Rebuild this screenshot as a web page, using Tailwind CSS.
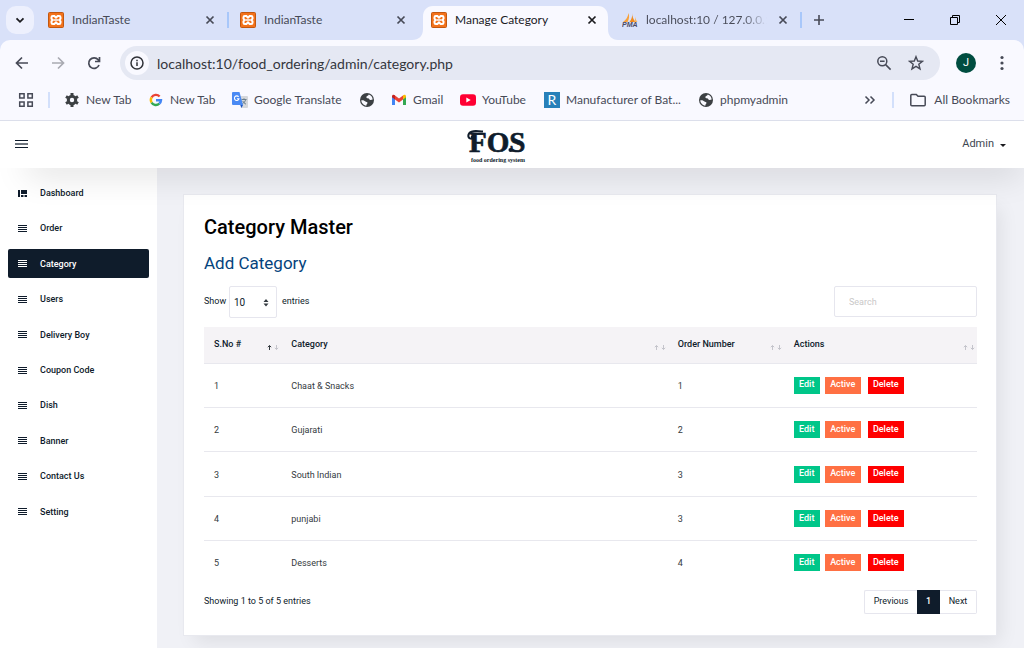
<!DOCTYPE html>
<html lang="en">
<head>
<meta charset="utf-8">
<title>Manage Category</title>
<script src="https://cdn.jsdelivr.net/npm/@tailwindcss/browser@4"></script>
</head>
<body class="flex min-h-screen flex-col bg-[#f0f1f6] font-['Roboto',sans-serif] text-[9px] text-[#0e1b2b]">

<svg class="hidden">
  <symbol id="xampp" viewBox="0 0 16 16">
    <rect x=".5" y=".5" width="15" height="15" rx="1" fill="#f3721b" stroke="#c2570f"/>
    <path d="M4.800 4h1.500L8 5.600 9.700 4h1.500c.8 0 1.300.5 1.300 1.300v1.400L11.400 8l1.100 1.300v1.400c0 .8-.5 1.300-1.300 1.300H9.700L8 10.400 6.300 12H4.800c-.8 0-1.300-.5-1.300-1.300V9.300L4.600 8 3.500 6.700V5.300C3.500 4.500 4 4 4.800 4z" fill="none" stroke="#fff" stroke-width="2"/>
    <path d="M5.500 8h5" stroke="#fff" stroke-width="1.500"/>
  </symbol>
  <symbol id="close" viewBox="0 0 16 16"><path d="M4.500 4.500l7 7M11.500 4.500l-7 7" stroke="currentColor" stroke-width="1.700"/></symbol>
  <symbol id="lines" viewBox="0 0 10 8"><path d="M0 .5h9M0 2.500h9M0 4.500h9M0 6.500h9" stroke="currentColor"/></symbol>
  <symbol id="globe" viewBox="0 0 16 16">
    <circle cx="8" cy="8" r="7" fill="#3c4043"/>
    <path d="M2.300 8.300c1.800-.3 3 .2 3.800 1 .9.900 2.400.3 2.400 1.700 0 1-1.200 1-1.200 2.700C4.500 13.400 2.300 11 2.300 8.300zM9.800 2.600c-.3 1.500-2 1.200-2.400 2.200-.3.900.3 1.500 1.500 1.500 1.400 0 1.200 1.600 2.500 1.700.9.100 1.400-.2 2.300-.5-.2-2.300-1.700-4.200-3.900-4.900z" fill="#f9f9ff"/>
  </symbol>
  <symbol id="sort" viewBox="0 0 14 8"><path d="M2.500 7V2.500M.8 4.200l1.700-1.700 1.700 1.700M9.500 2v4.500M7.800 4.800l1.700 1.700 1.700-1.700" fill="none" stroke="#c4c4cb"/></symbol>
</svg>

<header class="font-['Lato','Open_Sans',sans-serif] text-[12px] text-[#474a57]">
  <!-- Tab strip -->
  <div class="flex h-10 items-center bg-[#d9e1f9] pl-[6px]">
    <button aria-label="Search tabs" class="grid size-7 shrink-0 place-items-center rounded-[10px] bg-[#edf0fd]"><svg class="size-4" viewBox="0 0 16 16"><path d="M4.500 6.300L8 9.800l3.500-3.500" fill="none" stroke="#1b1b1f" stroke-width="1.800"/></svg></button>
    <div class="ml-[6px] flex h-full min-w-0">
      <div class="relative flex h-full w-[191px] shrink-0 items-center px-2">
        <svg class="mr-2 size-4"><use href="#xampp"/></svg><span class="flex-1">IndianTaste</span>
        <button aria-label="Close tab" class="mr-[5px] size-4"><svg class="size-4"><use href="#close"/></svg></button>
        <span class="absolute right-[2px] h-4 w-[2px] bg-[#a8c7fa]"></span>
      </div>
      <div class="flex h-full w-[191px] shrink-0 items-center px-2 pl-[9px]">
        <svg class="mr-2 size-4"><use href="#xampp"/></svg><span class="flex-1">IndianTaste</span>
        <button aria-label="Close tab" class="mr-[5px] size-4"><svg class="size-4"><use href="#close"/></svg></button>
      </div>
      <div class="relative flex h-full w-[191px] shrink-0 items-center px-2 pl-[9px] text-[#1b1b1f]">
        <svg class="absolute bottom-0 left-[-10px] h-[34px] w-[206px]" viewBox="0 0 206 34"><path d="M0 34c7 0 11-4 11-11V11C11 4 15 0 21 0h165c6 0 10 4 10 11v12c0 7 4 11 10 11z" fill="#f9f9ff"/></svg>
        <svg class="relative mr-2 size-4"><use href="#xampp"/></svg><span class="relative flex-1">Manage Category</span>
        <button aria-label="Close tab" class="relative mr-[5px] size-4"><svg class="size-4"><use href="#close"/></svg></button>
      </div>
      <div class="relative flex h-full w-[191px] shrink-0 items-center px-2 pl-[9px]">
        <svg class="mr-2 size-4" viewBox="0 0 16 16"><path d="M6.500 1c1 3 .8 6-1 9H1c3-2 5-5 5.500-9z" fill="#f9a13a"/><path d="M10.500 1c-.4 3 .5 6 3 9H7.500c2-2.500 2.800-5.500 3-9z" fill="#f28a1c"/><path d="M13.500 4.500c-.3 2 .7 4 2 5.500h-3z" fill="#f9b45c"/><text x="0" y="15" font-family="Liberation Sans" font-size="7" font-weight="bold" font-style="italic" fill="#4b4a66">PMA</text></svg>
        <span class="w-[121px] whitespace-nowrap bg-linear-to-r from-[#474a57] from-80% to-[#d9e1f9] bg-clip-text text-transparent">localhost:10 / 127.0.0.1</span>
        <button aria-label="Close tab" class="ml-2 size-4"><svg class="size-4"><use href="#close"/></svg></button>
        <span class="absolute right-[2px] h-4 w-[2px] bg-[#a8c7fa]"></span>
      </div>
      <button aria-label="New tab" class="ml-[7px] w-4"><svg class="size-4" viewBox="0 0 16 16"><path d="M8 3v10M3 8h10" stroke="currentColor" stroke-width="1.600"/></svg></button>
    </div>
    <div class="ml-auto flex h-full text-black">
      <button aria-label="Minimize" class="grid w-[46px] place-items-center"><svg class="size-3" viewBox="0 0 12 12"><path d="M1 5.500h10" stroke="currentColor"/></svg></button>
      <button aria-label="Restore" class="grid w-[46px] place-items-center"><svg class="size-3" viewBox="0 0 12 12"><path d="M1.500 3.500h7v7h-7zM3.500 3.500v-2h7v7h-2" fill="none" stroke="currentColor"/></svg></button>
      <button aria-label="Close" class="grid w-[46px] place-items-center"><svg class="size-3" viewBox="0 0 12 12"><path d="M1 1l10 10M11 1L1 11" stroke="currentColor"/></svg></button>
    </div>
  </div>

  <!-- Address bar -->
  <div class="bg-[#d9e1f9]">
    <div class="flex h-[46px] items-center rounded-t-[10px] bg-[#f9f9ff] pl-[14px] pr-[14px]">
      <button aria-label="Back" class="size-4"><svg class="size-4" viewBox="0 0 16 16"><path d="M14 8H3M8 2.500L2.500 8 8 13.500" fill="none" stroke="#474a57" stroke-width="1.700"/></svg></button>
      <button aria-label="Forward" class="ml-5 size-4"><svg class="size-4" viewBox="0 0 16 16"><path d="M2 8h11M8 2.500L13.500 8 8 13.500" fill="none" stroke="#a9aab2" stroke-width="1.700"/></svg></button>
      <button aria-label="Reload" class="ml-5 size-4"><svg class="size-4" viewBox="0 0 16 16"><path d="M13 10a5.300 5.300 0 1 1-.8-5.200L13.500 6M13.500 2v4.500H9" fill="none" stroke="#474a57" stroke-width="1.700"/></svg></button>
      <div class="ml-[18px] flex h-[34px] flex-1 items-center rounded-full bg-[#e5e8f3] px-[5px]">
        <button aria-label="Site information" class="grid size-6 place-items-center rounded-full bg-[#f9f9ff]"><svg class="size-4" viewBox="0 0 16 16"><circle cx="8" cy="8" r="6" fill="none" stroke="#303238" stroke-width="1.500"/><path d="M8 7.200V11M8 4.800v1.400" stroke="#303238" stroke-width="1.500"/></svg></button>
        <input aria-label="Address" class="ml-2 min-w-0 flex-1 bg-transparent text-[14px] text-[#34363d] outline-none" value="localhost:10/food_ordering/admin/category.php">
        <button aria-label="Zoom out" class="size-4"><svg class="size-4" viewBox="0 0 16 16"><circle cx="6.300" cy="6.300" r="4.500" fill="none" stroke="#474a57" stroke-width="1.500"/><path d="M9.600 9.600l5 5M4 6.300h4.600" stroke="#474a57" stroke-width="1.500"/></svg></button>
        <button aria-label="Bookmark this page" class="ml-4 mr-[11px] size-4"><svg class="size-4" viewBox="0 0 16 16"><path d="M8 1.700l1.700 4.300 4.700.3-3.600 3 1.200 4.600L8 11.400l-4 2.500 1.200-4.600-3.600-3L6.300 6z" fill="none" stroke="#474a57" stroke-width="1.400"/></svg></button>
      </div>
      <button aria-label="Profile" class="ml-4 size-5 rounded-full bg-[#004d40] font-['Roboto'] text-[11px] leading-5 text-white">J</button>
      <button aria-label="Menu" class="ml-[18px] size-4"><svg class="size-4" viewBox="0 0 16 16" fill="#474a57"><circle cx="8" cy="2.500" r="1.600"/><circle cx="8" cy="8" r="1.600"/><circle cx="8" cy="13.500" r="1.600"/></svg></button>
    </div>
  </div>

  <!-- Bookmarks -->
  <nav aria-label="Bookmarks" class="flex h-[35px] items-center whitespace-nowrap border-b border-[#dcdfeb] bg-[#f9f9ff] pb-[6px] pl-[18px] pr-[14px]">
    <button aria-label="Apps" class="size-4"><svg class="size-4" viewBox="0 0 16 16"><path d="M1.700 1.700h4.400v4.400H1.700zM9.900 1.700h4.400v4.400H9.900zM1.700 9.900h4.400v4.400H1.700zM9.900 9.900h4.400v4.400H9.900z" fill="none" stroke="#474a57" stroke-width="1.500"/></svg></button>
    <span class="ml-[14px] h-4 w-[2px] bg-[#d3e0fb]"></span>
    <a href="#" class="ml-[14px] flex w-[84px] items-center gap-[6px]"><svg class="size-4 shrink-0" viewBox="0 0 16 16"><circle cx="8" cy="8" r="3.700" fill="none" stroke="#3c4043" stroke-width="3"/><path d="M8 1v2.500M8 12.500V15M2 4.500l2 1.200M12 10.300l2 1.200M2 11.500l2-1.200M12 5.700l2-1.200" stroke="#3c4043" stroke-width="3"/></svg>New Tab</a>
    <a href="#" class="flex w-[84px] items-center gap-[6px]"><svg class="size-4 shrink-0" viewBox="0 0 16 16" fill="none" stroke-width="2.400"><path d="M3.600 5.400A5 5 0 0 1 11.600 4.500" stroke="#ea4335"/><path d="M3.600 5.400a5 5 0 0 0 0 5.200" stroke="#fbbc05"/><path d="M3.600 10.600a5 5 0 0 0 7.700 1.100" stroke="#34a853"/><path d="M11.300 11.700A5 5 0 0 0 13 8.200H8" stroke="#4285f4"/></svg>New Tab</a>
    <a href="#" class="flex w-[127px] items-center gap-[6px]"><svg class="size-4 shrink-0" viewBox="0 0 16 16"><path d="M6 4h9a1 1 0 0 1 1 1v10a1 1 0 0 1-1 1H9z" fill="#d5d7db"/><path d="M9.500 7.500h5M12 6.300v1.200M13.700 7.500c-.5 2-1.700 3.400-3.500 4.500M10.700 9c.7 1.500 1.800 2.500 3.300 3.200" fill="none" stroke="#6b7f8c"/><path d="M1 0h6.500L11 13H1a1 1 0 0 1-1-1V1a1 1 0 0 1 1-1z" fill="#4a8af4"/><path d="M8.300 13H11l-1.500 3z" fill="#1c55c4"/><path d="M6.600 4.800A2.300 2.300 0 1 0 7 6.700H4.900" fill="none" stroke="#fff" stroke-width="1.100"/></svg>Google Translate</a>
    <a href="#" aria-label="Website" class="w-8"><svg class="size-4"><use href="#globe"/></svg></a>
    <a href="#" class="flex w-[69px] items-center gap-[6px]"><svg class="size-4 shrink-0" viewBox="0 0 16 16"><path d="M1 4v9h3V6z" fill="#4285f4"/><path d="M12 6v7h3V4z" fill="#34a853"/><path d="M4 3.500v4L8 10.500l4-3v-4L8 6.600z" fill="#ea4335"/><path d="M1 4.300C1 2.500 2.700 2.200 4 3.300v4.200L1 5.300z" fill="#c5221f"/><path d="M15 4.300c0-1.800-1.700-2.100-3-1v4.200l3-2.200z" fill="#fbbc04"/></svg>Gmail</a>
    <a href="#" class="flex w-[84px] items-center gap-[6px]"><svg class="size-4 shrink-0" viewBox="0 0 16 16"><rect y="2.300" width="16" height="11.400" rx="3" fill="#ff0033"/><path d="M6.300 5.500v5L10.700 8z" fill="#fff"/></svg>YouTube</a>
    <a href="#" class="flex w-[154px] items-center gap-[6px]"><span class="grid size-4 shrink-0 place-items-center bg-[#2880b9] text-[14px] leading-4 text-white">R</span>Manufacturer of Bat...</a>
    <a href="#" class="flex items-center gap-[6px]"><svg class="size-4 shrink-0"><use href="#globe"/></svg>phpmyadmin</a>
    <button aria-label="More bookmarks" class="ml-auto size-4"><svg class="size-4" viewBox="0 0 16 16"><path d="M3.500 4.500L7 8l-3.500 3.500M8.500 4.500L12 8l-3.500 3.500" fill="none" stroke="#474a57" stroke-width="1.500"/></svg></button>
    <span class="ml-[14px] h-4 w-[2px] bg-[#d3e0fb]"></span>
    <a href="#" class="ml-4 flex items-center gap-2"><svg class="size-4" viewBox="0 0 16 16"><path d="M.8 3.500c0-.6.4-1 1-1h4.500l1.700 1.800h6.200c.6 0 1 .4 1 1v7.400c0 .6-.4 1-1 1H1.800c-.6 0-1-.4-1-1z" fill="none" stroke="#474a57" stroke-width="1.500"/></svg>All Bookmarks</a>
  </nav>
</header>

<!-- Site header -->
<div class="relative grid h-[47px] grid-cols-3 items-center bg-white px-[15px] shadow-[12px_19px_34px_-15px_rgba(0,0,0,0.18)]">
  <button aria-label="Toggle menu" class="h-4 w-[13px] justify-self-start"><svg class="h-4 w-[13px]" viewBox="0 0 13 16"><path d="M0 3.500h13M0 10.500h13" stroke="#0e1b2b"/><path d="M0 7h13" stroke="#6d747d" stroke-width="2"/></svg></button>
  <a href="#" aria-label="FOS food ordering system" class="mr-8 justify-self-center"><svg class="h-10 w-[60px]" viewBox="0 0 60 40" fill="#0f1c2b">
    <text x="3" y="27" font-family="Liberation Serif" font-weight="bold" font-size="29" stroke="#0f1c2b" stroke-width=".7">FOS</text>
    <path d="M17 6.500C11 6 4 5 2.500 9.500 1.500 13.500 5.500 15 7.500 12.500" fill="none" stroke="#0f1c2b" stroke-width="2"/><circle cx="6.500" cy="12" r="1.800"/><circle cx="44.500" cy="25" r="2"/>
    <text x="5" y="37" font-family="Liberation Serif" font-weight="bold" font-size="6">food ordering system</text>
  </svg></a>
  <button class="flex items-center gap-[6px] justify-self-end pr-[3px] text-[11px] text-[#3d4651]">Admin<span class="mt-[2px] border-x-[3px] border-t-[3px] border-x-transparent border-t-[#1b1b1f]"></span></button>
</div>

<div class="flex flex-1">
  <nav aria-label="Main" class="w-[157px] shrink-0 bg-white px-2 pt-[7px] font-medium">
    <ul class="grid h-[354px] auto-rows-fr items-center">
      <li><a href="#" class="flex h-[29px] items-center gap-3 rounded-[2px] pl-[10px] pt-[2px]"><svg class="h-2 w-[10px]" viewBox="0 0 10 8"><path d="M0 0h2v7H0zM3 0h6v4H3zM3 5h2.500v2H3zM6.500 5H9v2H6.500z" fill="currentColor"/></svg>Dashboard</a></li>
      <li><a href="#" class="flex h-[29px] items-center gap-3 rounded-[2px] pl-[10px] pt-[2px]"><svg class="h-2 w-[10px]"><use href="#lines"/></svg>Order</a></li>
      <li><a href="#" aria-current="page" class="flex h-[29px] items-center gap-3 rounded-[2px] bg-[#0f1c2b] pl-[10px] pt-[2px] text-white"><svg class="h-2 w-[10px]"><use href="#lines"/></svg>Category</a></li>
      <li><a href="#" class="flex h-[29px] items-center gap-3 rounded-[2px] pl-[10px] pt-[2px]"><svg class="h-2 w-[10px]"><use href="#lines"/></svg>Users</a></li>
      <li><a href="#" class="flex h-[29px] items-center gap-3 rounded-[2px] pl-[10px] pt-[2px]"><svg class="h-2 w-[10px]"><use href="#lines"/></svg>Delivery Boy</a></li>
      <li><a href="#" class="flex h-[29px] items-center gap-3 rounded-[2px] pl-[10px] pt-[2px]"><svg class="h-2 w-[10px]"><use href="#lines"/></svg>Coupon Code</a></li>
      <li><a href="#" class="flex h-[29px] items-center gap-3 rounded-[2px] pl-[10px] pt-[2px]"><svg class="h-2 w-[10px]"><use href="#lines"/></svg>Dish</a></li>
      <li><a href="#" class="flex h-[29px] items-center gap-3 rounded-[2px] pl-[10px] pt-[2px]"><svg class="h-2 w-[10px]"><use href="#lines"/></svg>Banner</a></li>
      <li><a href="#" class="flex h-[29px] items-center gap-3 rounded-[2px] pl-[10px] pt-[2px]"><svg class="h-2 w-[10px]"><use href="#lines"/></svg>Contact Us</a></li>
      <li><a href="#" class="flex h-[29px] items-center gap-3 rounded-[2px] pl-[10px] pt-[2px]"><svg class="h-2 w-[10px]"><use href="#lines"/></svg>Setting</a></li>
    </ul>
  </nav>

  <main class="min-w-0 flex-1 px-[26px] pb-3 pr-[27px] pt-[26px]">
    <section class="border border-[#e8e9ef] bg-white px-5 pb-[21px] pr-[19px] pt-[18px] shadow-[7px_10px_18px_-4px_rgba(0,0,0,0.08)]">
      <h1 class="text-[20px] font-medium leading-7 text-black">Category Master</h1>
      <h2 class="mt-[10px] text-[17px] leading-6 text-[#04437d]"><a href="#">Add Category</a></h2>

      <div class="mt-[11px] flex items-start justify-between">
        <label class="flex h-8 items-center">
          <span class="w-[25px]">Show</span>
          <span class="relative flex">
            <select class="h-8 w-12 appearance-none rounded-[2px] border border-[#e6e6ee] bg-white pl-1 text-[10px] text-[#0e1b2b]"><option>10</option><option>25</option><option>50</option></select>
            <svg class="pointer-events-none absolute right-2 top-3 h-[9px] w-[6px]" viewBox="0 0 6 9"><path d="M3 1l2.500 3h-5zM3 8.500l2.500-3h-5z" fill="#343a40"/></svg>
          </span>
          <span class="ml-[5px]">entries</span>
        </label>
        <input type="search" aria-label="Search" placeholder="Search" class="h-[31px] w-[143px] rounded-[2px] border border-[#e6e6ee] bg-white px-[14px] placeholder:text-[#c9c8c8]">
      </div>

      <table class="mt-[9px] h-[257px] w-full table-fixed border-collapse text-left">
        <thead class="bg-[#f5f3f6]">
          <tr class="h-9 border-b border-[#e8e8ee]">
            <th class="w-[10%] pl-[10px] font-medium"><span class="flex items-center justify-between">S.No #<svg class="mt-1 h-2 w-[14px]" viewBox="0 0 14 8"><path d="M2.500 7V2.500M.8 4.200l1.700-1.700 1.700 1.700" fill="none" stroke="#343a40"/><path d="M9.500 2v4.500M7.800 4.800l1.700 1.700 1.700-1.700" fill="none" stroke="#c4c4cb"/></svg></span></th>
            <th class="w-[50%] pl-[10px] font-medium"><span class="flex items-center justify-between">Category<svg class="mt-1 h-2 w-[14px]"><use href="#sort"/></svg></span></th>
            <th class="w-[15%] pl-[10px] font-medium"><span class="flex items-center justify-between">Order Number<svg class="mt-1 h-2 w-[14px]"><use href="#sort"/></svg></span></th>
            <th class="w-[25%] pl-[10px] font-medium"><span class="flex items-center justify-between">Actions<svg class="mt-1 h-2 w-[14px]"><use href="#sort"/></svg></span></th>
          </tr>
        </thead>
        <tbody class="text-[#343a40]">
          <tr class="border-b border-[#e8e8ee]"><td class="pl-[10px] pt-[3px]">1</td><td class="pl-[10px] pt-[3px]">Chaat &amp; Snacks</td><td class="pl-[10px] pt-[3px]">1</td><td class="pl-[10px]"><div class="flex font-medium text-white"><button class="h-[17px] w-[26px] bg-[#00c689]">Edit</button><button class="ml-[5px] h-[17px] w-9 bg-[#ff7043]">Active</button><button class="ml-[7px] h-[17px] w-9 bg-[#ff0000]">Delete</button></div></td></tr>
          <tr class="border-b border-[#e8e8ee]"><td class="pl-[10px] pt-[3px]">2</td><td class="pl-[10px] pt-[3px]">Gujarati</td><td class="pl-[10px] pt-[3px]">2</td><td class="pl-[10px]"><div class="flex font-medium text-white"><button class="h-[17px] w-[26px] bg-[#00c689]">Edit</button><button class="ml-[5px] h-[17px] w-9 bg-[#ff7043]">Active</button><button class="ml-[7px] h-[17px] w-9 bg-[#ff0000]">Delete</button></div></td></tr>
          <tr class="border-b border-[#e8e8ee]"><td class="pl-[10px] pt-[3px]">3</td><td class="pl-[10px] pt-[3px]">South Indian</td><td class="pl-[10px] pt-[3px]">3</td><td class="pl-[10px]"><div class="flex font-medium text-white"><button class="h-[17px] w-[26px] bg-[#00c689]">Edit</button><button class="ml-[5px] h-[17px] w-9 bg-[#ff7043]">Active</button><button class="ml-[7px] h-[17px] w-9 bg-[#ff0000]">Delete</button></div></td></tr>
          <tr class="border-b border-[#e8e8ee]"><td class="pl-[10px] pt-[3px]">4</td><td class="pl-[10px] pt-[3px]">punjabi</td><td class="pl-[10px] pt-[3px]">3</td><td class="pl-[10px]"><div class="flex font-medium text-white"><button class="h-[17px] w-[26px] bg-[#00c689]">Edit</button><button class="ml-[5px] h-[17px] w-9 bg-[#ff7043]">Active</button><button class="ml-[7px] h-[17px] w-9 bg-[#ff0000]">Delete</button></div></td></tr>
          <tr><td class="pl-[10px] pt-[3px]">5</td><td class="pl-[10px] pt-[3px]">Desserts</td><td class="pl-[10px] pt-[3px]">4</td><td class="pl-[10px]"><div class="flex font-medium text-white"><button class="h-[17px] w-[26px] bg-[#00c689]">Edit</button><button class="ml-[5px] h-[17px] w-9 bg-[#ff7043]">Active</button><button class="ml-[7px] h-[17px] w-9 bg-[#ff0000]">Delete</button></div></td></tr>
        </tbody>
      </table>

      <div class="mt-[6px] flex items-center justify-between">
        <p>Showing 1 to 5 of 5 entries</p>
        <nav aria-label="Pages" class="flex h-6">
          <button class="w-[53px] rounded-l-[2px] border border-r-0 border-[#e6e6ee]">Previous</button>
          <button aria-current="page" class="w-[23px] bg-[#0f1c2b] font-medium text-white">1</button>
          <button class="w-[37px] rounded-r-[2px] border border-l-0 border-[#e6e6ee]">Next</button>
        </nav>
      </div>
    </section>
  </main>
</div>
</body>
</html>
